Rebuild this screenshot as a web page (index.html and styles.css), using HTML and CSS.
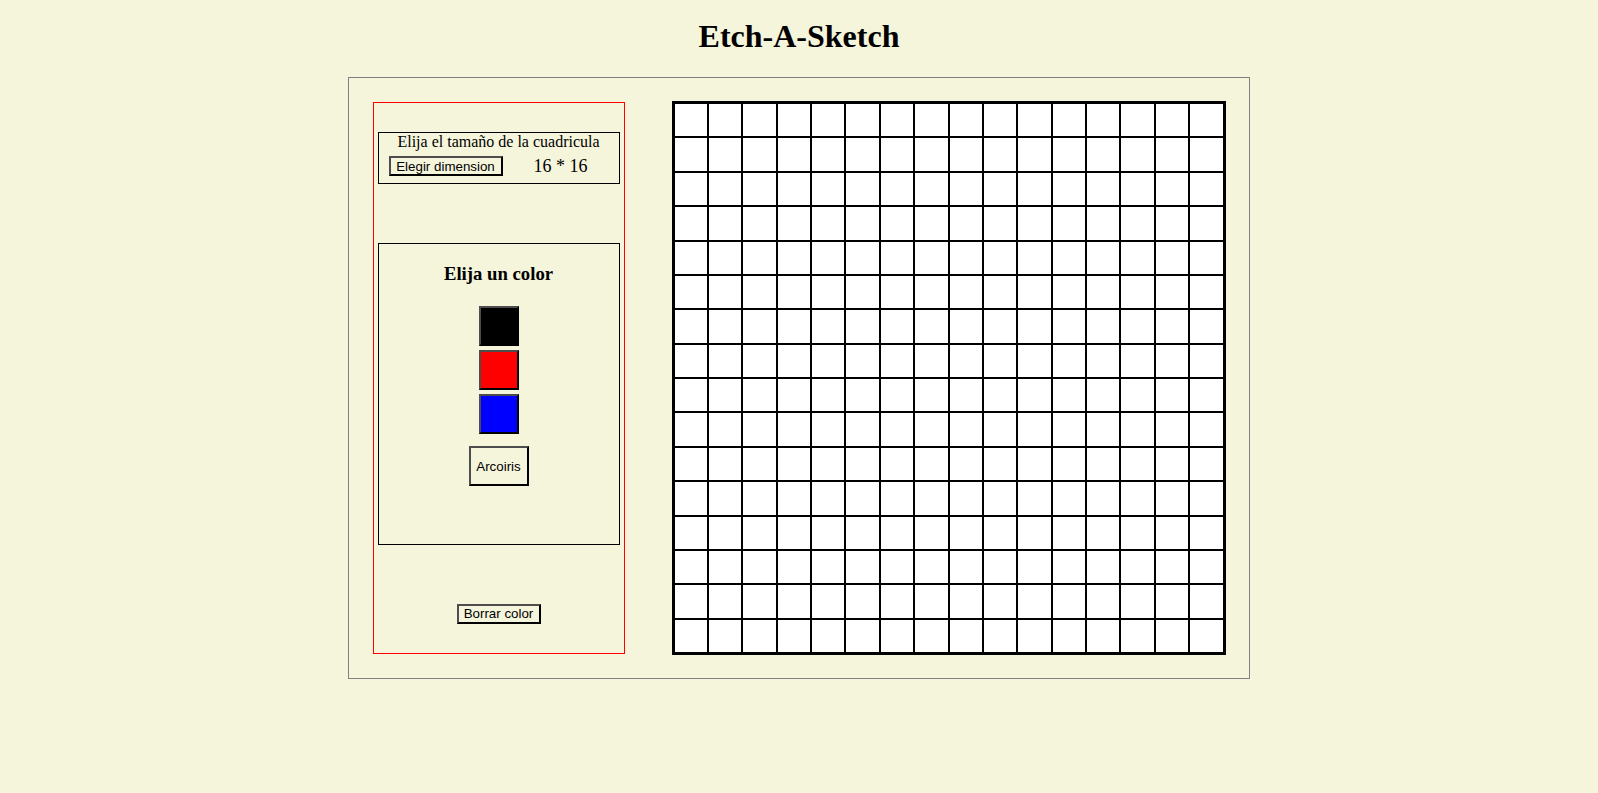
FILE: index.html
```html
<!DOCTYPE html>
<html lang="es">
<head>
<meta charset="utf-8">
<title>Etch-A-Sketch</title>
<link rel="stylesheet" href="styles.css">
</head>
<body>
<h1 class="title">Etch-A-Sketch</h1>
<main class="container">
  <aside class="panel">
    <div class="size-box">
      <div class="size-label">Elija el tamaño de la cuadricula</div>
      <div class="size-row">
        <button class="btn btn-dim">Elegir dimension</button>
        <span class="size-value">16 * 16</span>
      </div>
    </div>
    <div class="color-box">
      <h3 class="color-title">Elija un color</h3>
      <div class="swatches">
        <button class="swatch swatch-black" aria-label="negro"></button>
        <button class="swatch swatch-red" aria-label="rojo"></button>
        <button class="swatch swatch-blue" aria-label="azul"></button>
      </div>
      <button class="btn btn-rainbow">Arcoiris</button>
    </div>
    <button class="btn btn-clear">Borrar color</button>
  </aside>
  <section class="grid" id="grid"></section>
</main>
<script>
  var g = document.getElementById('grid');
  for (var i = 0; i < 256; i++) {
    var c = document.createElement('div');
    c.className = 'cell';
    g.appendChild(c);
  }
</script>
</body>
</html>
```

FILE: styles.css
```css
html, body {
  margin: 0;
  padding: 0;
}
body {
  background: #f5f5dc;
  font-family: "Liberation Serif", "Times New Roman", serif;
  color: #000;
  min-height: 793px;
}
.title {
  font-size: 32px;
  font-weight: bold;
  text-align: center;
  margin: 0;
  padding-top: 18px;
  margin-bottom: 23px;
  line-height: 36px;
}
.container {
  box-sizing: content-box;
  width: 900px;
  height: 600px;
  margin: 0 auto;
  border: 1px solid #808080;
  display: flex;
  align-items: center;
  justify-content: space-around;
}
.panel {
  width: 250px;
  height: 550px;
  border: 1px solid #ff0000;
  display: flex;
  flex-direction: column;
  align-items: center;
  justify-content: space-around;
}
.size-box {
  width: 240px;
  height: 50px;
  border: 1px solid #000;
  text-align: center;
}
.size-label {
  font-size: 16px;
  line-height: 18.4px;
}
.size-row {
  height: 29px;
  display: flex;
  align-items: center;
}
.btn {
  font-family: "Liberation Sans", Arial, sans-serif;
  font-size: 13.33px;
  color: #000;
  background: transparent;
  border-style: solid;
  border-width: 2px;
  border-color: #4d4d4d #000 #000 #4d4d4d;
  padding: 0;
  box-sizing: border-box;
  cursor: pointer;
}
.btn-dim {
  width: 114px;
  height: 20px;
  margin-left: 10px;
}
.size-value {
  font-size: 18px;
  margin-left: 31px;
}
.color-box {
  width: 240px;
  height: 300px;
  border: 1px solid #000;
  display: flex;
  flex-direction: column;
  align-items: center;
}
.color-title {
  font-size: 18.72px;
  font-weight: bold;
  margin: 19px 0 22px;
  line-height: 21.5px;
}
.swatches {
  display: flex;
  flex-direction: column;
  gap: 4px;
}
.swatch {
  width: 40px;
  height: 40px;
  box-sizing: border-box;
  border-style: solid;
  border-width: 2px;
  border-color: #4d4d4d #000 #000 #4d4d4d;
  padding: 0;
  cursor: pointer;
}
.swatch-black { background: #000; }
.swatch-red { background: #ff0000; }
.swatch-blue { background: #0000ff; }
.btn-rainbow {
  width: 60px;
  height: 40px;
  margin-top: 12px;
}
.btn-clear {
  width: 84px;
  height: 20px;
}
.grid {
  box-sizing: border-box;
  width: 554px;
  height: 554px;
  border: 3px solid #000;
  background: #000;
  display: grid;
  grid-template-columns: repeat(16, 1fr);
  grid-template-rows: repeat(16, 1fr);
  gap: 2px;
}
.cell {
  background: #fff;
}
```
